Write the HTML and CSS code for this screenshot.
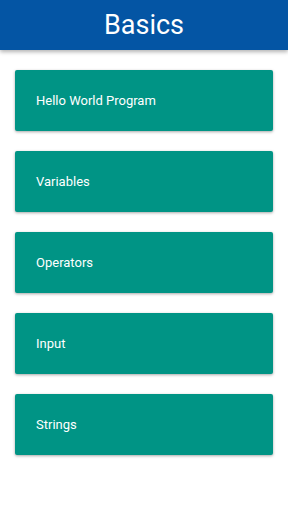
FILE: index.html
```html
<!DOCTYPE html>
<html lang="en">
<head>
  <meta charset="UTF-8" />
  <meta name="viewport" content="width=device-width, initial-scale=1.0"/>
  <title>Basics</title>
  <link rel="stylesheet" href="styles.css">
</head>
<body>

  <header class="app-bar">Basics</header>

  <div class="topic-list">
    <div class="topic-card">Hello World Program</div>
    <div class="topic-card">Variables</div>
    <div class="topic-card">Operators</div>
    <div class="topic-card">Input</div>
    <div class="topic-card">Strings</div>
  </div>

</body>
</html>
```

FILE: styles.css
```css
body {
  margin: 0;
  font-family: Roboto, 'Noto Sans', sans-serif;
  background-color: #ffffff;
}

.app-bar {
  height: 50px;
  background-color: #0455a4;
  color: #ffffff;
  font-size: 27px;
  display: flex;
  justify-content: center;
  align-items: center;
  box-shadow: 0 2px 4px rgba(0, 0, 0, 0.3);
}

.topic-list {
  display: flex;
  flex-direction: column;
  gap: 20px;
  padding: 20px 15px;
}

.topic-card {
  height: 61px;
  background-color: #009485;
  color: #ffffff;
  font-size: 13px;
  display: flex;
  align-items: center;
  padding-left: 21px;
  border-radius: 2px;
  box-shadow: 0 1px 3px rgba(0, 0, 0, 0.35);
}
```
